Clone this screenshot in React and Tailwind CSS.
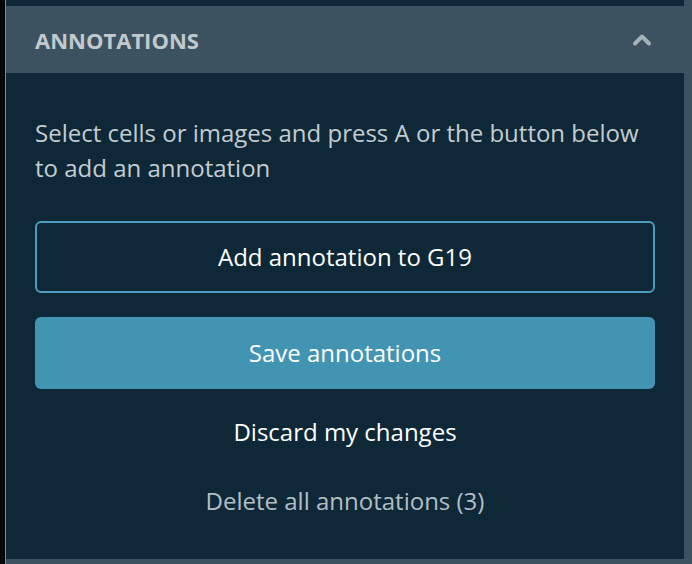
import { ChevronUp } from "lucide-react";

const font = { fontFamily: '"Open Sans", "Noto Sans", sans-serif' };

export default function App() {
  return (
    <div className="flex h-[564px] w-[692px] bg-[#050708]" style={font}>
      <div className="w-[5px] shrink-0" />
      <div className="w-px shrink-0 bg-[#7d8a92]" />
      <div className="flex min-w-0 flex-1 flex-col">
        <div className="flex">
          <div className="h-[6px] flex-1 bg-[#0e2838]" />
          <div className="w-[8px] bg-[#3d5260]" />
        </div>
        <div className="flex h-[67px] shrink-0 items-center justify-between bg-[#3d5260] pl-[29px] pr-[36px]">
          <h2 className="text-[22px] font-bold leading-[30px] text-[#c0c9ce]">ANNOTATIONS</h2>
          <ChevronUp className="h-[28px] w-[28px] text-[#a3b1b9]" strokeWidth={3.4} />
        </div>
        <div className="flex flex-1">
          <div className="flex flex-1 flex-col bg-[#0e2838] pl-[29px] pr-[29px] pt-[42px]">
            <p className="text-[24px] leading-[35px] text-[#c4ccd1]">
              Select cells or images and press A or the button below to add an annotation
            </p>
            <button className="mt-[36px] h-[72px] w-full rounded-[6px] border-2 border-[#4c9dbd] text-[24px] leading-[32px] text-white">
              Add annotation to G19
            </button>
            <button className="mt-[24px] h-[72px] w-full rounded-[6px] bg-[#4294b3] text-[24px] leading-[32px] text-white">
              Save annotations
            </button>
            <button className="mt-[27px] text-[24px] leading-[32px] text-white">Discard my changes</button>
            <button className="mt-[37px] text-[24px] leading-[32px] text-[#b4bec4]">Delete all annotations (3)</button>
          </div>
          <div className="w-[8px] bg-[#3d5260]" />
        </div>
        <div className="h-[5px] shrink-0 bg-[#3d5260]" />
      </div>
    </div>
  );
}
